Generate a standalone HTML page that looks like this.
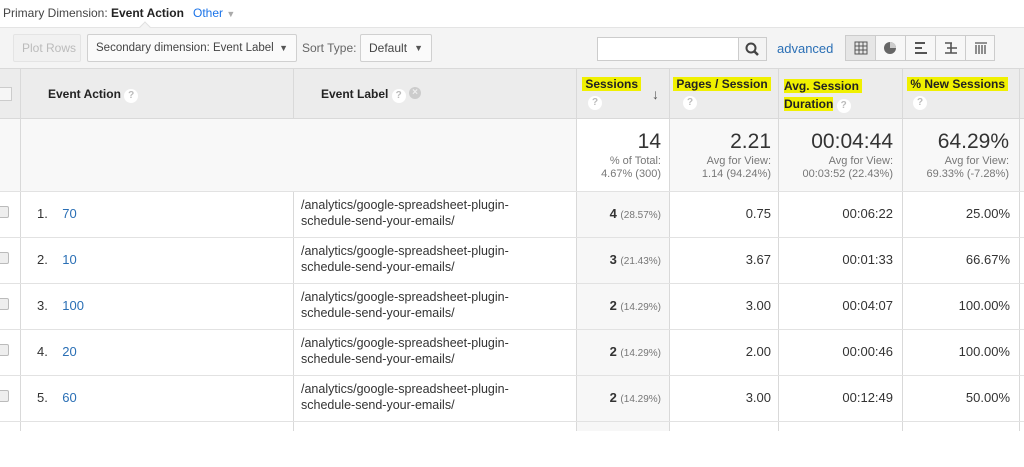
<!DOCTYPE html>
<html><head><style>
*{box-sizing:border-box;margin:0;padding:0}
body{width:1024px;height:431px;overflow:hidden;background:#fff;font-family:"Liberation Sans",Arial,sans-serif;font-size:12px;color:#333;position:relative}
.a{position:absolute}
.hl{background:#f0f000}
.q{display:inline-block;width:14px;height:14px;border-radius:50%;background:#fff;color:#bbb;font-size:10px;text-align:center;line-height:14px;font-weight:bold}
.vl{position:absolute;top:68px;bottom:0;width:1px;background:#d9d9d9}
.hd{font-weight:bold;font-size:12px;color:#222}
.row{position:absolute;left:0;width:1024px;height:46px;border-top:1px solid #e2e2e2}
.n{position:absolute;text-align:right;font-size:13px;color:#333}
.btn{position:absolute;border:1px solid #d0d0d0;border-radius:2px;background:#f9f9f9;height:28px;line-height:26px;font-size:12px;color:#444;padding-left:8px}
.lb{position:absolute;left:301px;font-size:12.5px;line-height:16px;color:#333}
</style></head><body>
<div class="a" style="left:3px;top:6px;font-size:12px;color:#444">Primary Dimension:</div>
<div class="a" style="left:111px;top:6px;font-weight:bold;color:#222">Event Action</div>
<div class="a" style="left:193px;top:6px;color:#1a73e8">Other <span style="color:#aaa;font-size:9px">▼</span></div>
<div class="a" style="left:0;top:27px;width:1024px;height:42px;background:#f4f4f4;border-top:1px solid #e4e4e4"></div>
<div class="a" style="left:141px;top:23px;width:8px;height:8px;background:#f4f4f4;border-left:1px solid #e0e0e0;border-top:1px solid #e0e0e0;transform:rotate(45deg)"></div>
<div class="btn" style="left:13px;top:34px;width:68px;color:#bbb;background:#f1f1f1;border-color:#e4e4e4">Plot Rows</div>
<div class="btn" style="left:87px;top:34px;width:210px;background:#fafafa;font-size:11.5px">Secondary dimension: Event Label <span style="position:absolute;right:8px;font-size:9px;color:#555">▼</span></div>
<div class="a" style="left:302px;top:41px;color:#666">Sort Type:</div>
<div class="btn" style="left:360px;top:34px;width:72px;background:#fafafa">Default <span style="position:absolute;right:8px;font-size:9px;color:#555">▼</span></div>
<div class="a" style="left:597px;top:37px;width:170px;height:24px;border:1px solid #ccc;background:#fff"></div>
<div class="a" style="left:738px;top:37px;width:29px;height:24px;border:1px solid #ccc;background:#f4f4f4"><svg width="27" height="22"><circle cx="12" cy="10" r="4.5" stroke="#444" stroke-width="2" fill="none"/><path d="M15 13l4 4" stroke="#444" stroke-width="2.5"/></svg></div>
<div class="a" style="left:777px;top:41px;color:#2a6fb5;font-size:13px">advanced</div>
<div class="a" style="left:845px;top:35px;width:150px;height:26px;border:1px solid #ccc;background:#f7f7f7"></div>
<div class="a" style="left:846px;top:36px;width:30px;height:24px;background:#e6e6e6;border-right:1px solid #ccc"><svg width="30" height="24"><rect x="9" y="6" width="12" height="12" fill="none" stroke="#555"/><path d="M13 6v12M17 6v12M9 10h12M9 14h12" stroke="#555"/></svg></div>
<div class="a" style="left:876px;top:36px;width:30px;height:24px;border-right:1px solid #ccc"><svg width="30" height="24"><circle cx="14" cy="12" r="6" fill="#666"/><path d="M14 12V6A6 6 0 0 1 20 12Z" fill="#ccc"/></svg></div>
<div class="a" style="left:906px;top:36px;width:30px;height:24px;border-right:1px solid #ccc"><svg width="30" height="24"><path d="M9 7h10M9 12h7M9 17h12" stroke="#555" stroke-width="2"/></svg></div>
<div class="a" style="left:936px;top:36px;width:30px;height:24px;border-right:1px solid #ccc"><svg width="30" height="24"><path d="M9 7h7M11 12h10M9 17h12M15 7v10" stroke="#555" stroke-width="1.6"/></svg></div>
<div class="a" style="left:966px;top:36px;width:29px;height:24px"><svg width="29" height="24"><path d="M9 7h12M10 9v9M13 9v9M16 9v9M19 9v9" stroke="#555" stroke-width="1.3"/></svg></div>

<div class="a" style="left:0;top:68px;width:1024px;height:51px;background:#ececec;border-top:1px solid #d9d9d9;border-bottom:1px solid #d9d9d9"></div>
<div class="a" style="left:0;top:119px;width:1024px;height:72px;background:#f8f8f8"></div>
<div class="a" style="left:576px;top:119px;width:93px;height:72px;background:#fff"></div>
<div class="a" style="left:576px;top:191px;width:93px;height:240px;background:#f7f7f7"></div>
<div class="a" style="left:-2px;top:87px;width:14px;height:14px;border:1px solid #ccc;background:#f6f6f6"></div>
<div class="a hd" style="left:48px;top:87px">Event Action <span class="q">?</span></div>
<div class="a hd" style="left:321px;top:87px">Event Label <span class="q">?</span> <span style="display:inline-block;width:12px;height:12px;border-radius:50%;background:#ccc;color:#eee;font-size:10px;line-height:12px;text-align:center;vertical-align:3px">×</span></div>
<div class="a hd" style="left:582px;top:77px"><span class="hl">&nbsp;Sessions&nbsp;</span><br><span class="q" style="margin:5px 0 0 6px">?</span></div>
<div class="a" style="left:652px;top:86px;font-size:14px;color:#555">↓</div>
<div class="a hd" style="left:673px;top:77px"><span class="hl">&nbsp;Pages / Session&nbsp;</span><br><span class="q" style="margin:5px 0 0 10px">?</span></div>
<div class="a hd" style="left:784px;top:77px;line-height:18px"><span class="hl">Avg. Session&nbsp;</span><br><span class="hl">Duration</span> <span class="q">?</span></div>
<div class="a hd" style="left:907px;top:77px"><span class="hl">&nbsp;% New Sessions&nbsp;</span><br><span class="q" style="margin:5px 0 0 6px">?</span></div>

<div class="vl" style="left:20px"></div><div class="vl" style="left:293px;height:51px;bottom:auto"></div><div class="vl" style="left:293px;top:191px"></div><div class="vl" style="left:576px"></div><div class="vl" style="left:669px"></div><div class="vl" style="left:778px"></div><div class="vl" style="left:902px"></div><div class="vl" style="left:1019px"></div>

<div class="n" style="left:576px;width:85px;top:130px;font-size:21px;color:#333">14</div>
<div class="n" style="left:576px;width:85px;top:155px;font-size:11px;color:#777;line-height:13px">% of Total:<br>4.67% (300)</div>
<div class="n" style="left:669px;width:102px;top:130px;font-size:21px">2.21</div>
<div class="n" style="left:669px;width:102px;top:155px;font-size:11px;color:#777;line-height:13px">Avg for View:<br>1.14 (94.24%)</div>
<div class="n" style="left:778px;width:115px;top:130px;font-size:21px">00:04:44</div>
<div class="n" style="left:778px;width:115px;top:155px;font-size:11px;color:#777;line-height:13px">Avg for View:<br>00:03:52 (22.43%)</div>
<div class="n" style="left:902px;width:107px;top:130px;font-size:21px">64.29%</div>
<div class="n" style="left:902px;width:107px;top:155px;font-size:11px;color:#777;line-height:13px">Avg for View:<br>69.33% (-7.28%)</div>

<div class="row" style="top:191px"></div><div class="row" style="top:237px"></div><div class="row" style="top:283px"></div><div class="row" style="top:329px"></div><div class="row" style="top:375px"></div><div class="row" style="top:421px"></div>

<div class="a" style="left:-3px;top:206px;width:12px;height:12px;border:1px solid #bbb;border-radius:2px;background:#eee"></div>
<div class="a" style="left:-3px;top:252px;width:12px;height:12px;border:1px solid #bbb;border-radius:2px;background:#eee"></div>
<div class="a" style="left:-3px;top:298px;width:12px;height:12px;border:1px solid #bbb;border-radius:2px;background:#eee"></div>
<div class="a" style="left:-3px;top:344px;width:12px;height:12px;border:1px solid #bbb;border-radius:2px;background:#eee"></div>
<div class="a" style="left:-3px;top:390px;width:12px;height:12px;border:1px solid #bbb;border-radius:2px;background:#eee"></div>

<div class="a" style="left:37px;top:206px;font-size:13px">1.&nbsp;&nbsp;&nbsp;&nbsp;<span style="color:#2a6fb5">70</span></div>
<div class="a" style="left:37px;top:252px;font-size:13px">2.&nbsp;&nbsp;&nbsp;&nbsp;<span style="color:#2a6fb5">10</span></div>
<div class="a" style="left:37px;top:298px;font-size:13px">3.&nbsp;&nbsp;&nbsp;&nbsp;<span style="color:#2a6fb5">100</span></div>
<div class="a" style="left:37px;top:344px;font-size:13px">4.&nbsp;&nbsp;&nbsp;&nbsp;<span style="color:#2a6fb5">20</span></div>
<div class="a" style="left:37px;top:390px;font-size:13px">5.&nbsp;&nbsp;&nbsp;&nbsp;<span style="color:#2a6fb5">60</span></div>

<div class="lb" style="top:197px">/analytics/google-spreadsheet-plugin-<br>schedule-send-your-emails/</div>
<div class="lb" style="top:243px">/analytics/google-spreadsheet-plugin-<br>schedule-send-your-emails/</div>
<div class="lb" style="top:289px">/analytics/google-spreadsheet-plugin-<br>schedule-send-your-emails/</div>
<div class="lb" style="top:335px">/analytics/google-spreadsheet-plugin-<br>schedule-send-your-emails/</div>
<div class="lb" style="top:381px">/analytics/google-spreadsheet-plugin-<br>schedule-send-your-emails/</div>

<div class="n" style="left:576px;width:85px;top:206px"><b>4</b> <span style="font-size:10px;color:#777">(28.57%)</span></div>
<div class="n" style="left:576px;width:85px;top:252px"><b>3</b> <span style="font-size:10px;color:#777">(21.43%)</span></div>
<div class="n" style="left:576px;width:85px;top:298px"><b>2</b> <span style="font-size:10px;color:#777">(14.29%)</span></div>
<div class="n" style="left:576px;width:85px;top:344px"><b>2</b> <span style="font-size:10px;color:#777">(14.29%)</span></div>
<div class="n" style="left:576px;width:85px;top:390px"><b>2</b> <span style="font-size:10px;color:#777">(14.29%)</span></div>

<div class="n" style="left:669px;width:102px;top:206px">0.75</div>
<div class="n" style="left:669px;width:102px;top:252px">3.67</div>
<div class="n" style="left:669px;width:102px;top:298px">3.00</div>
<div class="n" style="left:669px;width:102px;top:344px">2.00</div>
<div class="n" style="left:669px;width:102px;top:390px">3.00</div>

<div class="n" style="left:778px;width:115px;top:206px">00:06:22</div>
<div class="n" style="left:778px;width:115px;top:252px">00:01:33</div>
<div class="n" style="left:778px;width:115px;top:298px">00:04:07</div>
<div class="n" style="left:778px;width:115px;top:344px">00:00:46</div>
<div class="n" style="left:778px;width:115px;top:390px">00:12:49</div>

<div class="n" style="left:902px;width:108px;top:206px">25.00%</div>
<div class="n" style="left:902px;width:108px;top:252px">66.67%</div>
<div class="n" style="left:902px;width:108px;top:298px">100.00%</div>
<div class="n" style="left:902px;width:108px;top:344px">100.00%</div>
<div class="n" style="left:902px;width:108px;top:390px">50.00%</div>
</body></html>
